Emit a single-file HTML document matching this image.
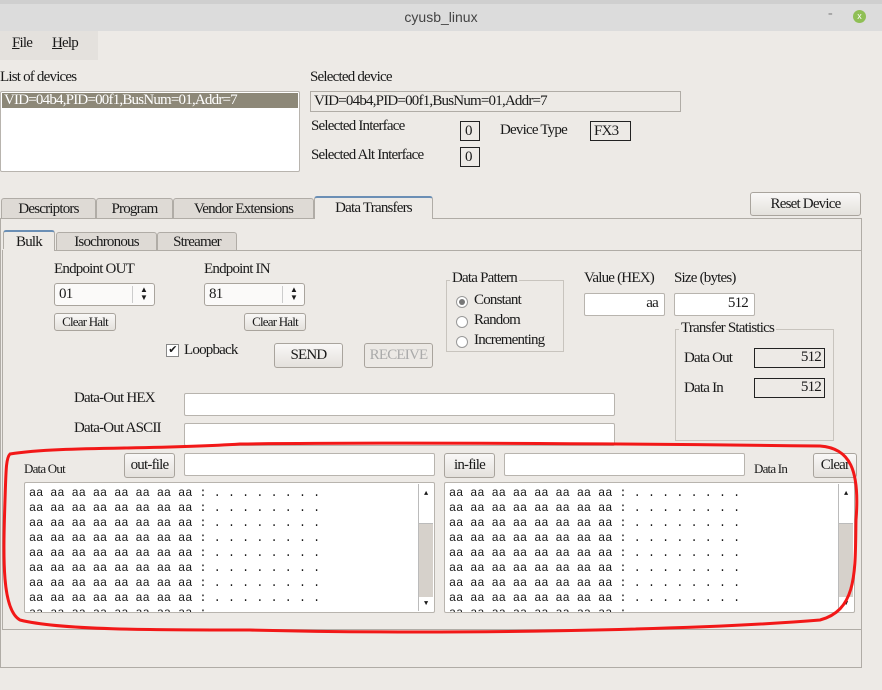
<!DOCTYPE html>
<html><head><meta charset="utf-8"><style>
*{box-sizing:border-box;margin:0;padding:0}
body{width:882px;height:690px;overflow:hidden;background:#edeae6;font-family:"Liberation Serif",serif;font-size:15px;color:#1a1a1a;position:relative;letter-spacing:-0.8px}
.a{position:absolute;white-space:nowrap}
.box{position:absolute;background:#fff;border:1px solid #b8b4ae;border-radius:2px}
.btn{position:absolute;background:linear-gradient(#f9f8f7,#e4e1dc);border:1px solid #a9a49d;border-radius:3px;text-align:center}
.blk{position:absolute;border:1px solid #222;background:#edeae6}
.tab{position:absolute;border:1px solid #b0aca6;border-bottom:none;background:#dedad5;text-align:center;border-radius:3px 3px 0 0}
.mono{font-family:"Liberation Mono",monospace;font-size:12px;line-height:15px;letter-spacing:-0.1px;padding:3px 0 0 4px;white-space:pre;overflow:hidden}
.sb{position:absolute;top:1px;right:1px;width:15px;bottom:1px;background:#d6d1cb;border-left:1px solid #bbb}
</style></head><body>
<div class="a" style="left:0;top:0;width:882px;height:4px;background:#cfcfcf"></div>
<div class="a" style="left:0;top:4px;width:882px;height:27px;background:#dcdcdc;text-align:center;font-family:'Liberation Sans',sans-serif;font-size:14px;line-height:27px;color:#444;letter-spacing:0">cyusb_linux</div>
<div class="a" style="left:828px;top:6px;color:#777;font-size:14px">-</div>
<div class="a" style="left:853px;top:10px;width:13px;height:13px;border-radius:50%;background:#8fbf55;color:#fff;font-size:9px;text-align:center;line-height:13px;font-family:'Liberation Sans',sans-serif;letter-spacing:0">x</div>
<div class="a" style="left:0;top:31px;width:98px;height:29px;background:#e4e1dd"></div>
<div class="a" style="left:12px;top:35px"><u>F</u>ile</div>
<div class="a" style="left:52px;top:35px"><u>H</u>elp</div>

<div class="a" style="left:0;top:69px">List of devices</div>
<div class="box" style="left:0;top:91px;width:300px;height:81px"></div>
<div class="a" style="left:2px;top:93px;width:296px;height:15px;background:#8d8878;color:#fff;padding-left:2px;line-height:15px">VID=04b4,PID=00f1,BusNum=01,Addr=7</div>
<div class="a" style="left:310px;top:69px">Selected device</div>
<div class="a" style="left:310px;top:91px;width:371px;height:21px;border:1px solid #b0aca6;padding:1px 0 0 3px">VID=04b4,PID=00f1,BusNum=01,Addr=7</div>
<div class="a" style="left:311px;top:118px">Selected Interface</div>
<div class="blk" style="left:460px;top:121px;width:20px;height:20px;padding:1px 0 0 4px">0</div>
<div class="a" style="left:500px;top:122px">Device Type</div>
<div class="blk" style="left:590px;top:121px;width:41px;height:20px;padding:1px 0 0 3px">FX3</div>
<div class="a" style="left:311px;top:147px">Selected Alt Interface</div>
<div class="blk" style="left:460px;top:147px;width:20px;height:20px;padding:1px 0 0 4px">0</div>

<div class="tab" style="left:1px;top:198px;width:95px;height:20px;line-height:20px">Descriptors</div>
<div class="tab" style="left:96px;top:198px;width:77px;height:20px;line-height:20px">Program</div>
<div class="tab" style="left:173px;top:198px;width:141px;height:20px;line-height:20px">Vendor Extensions</div>
<div class="tab" style="left:314px;top:196px;width:119px;height:23px;line-height:20px;background:#edeae6;border-top:2px solid #6b8fb5">Data Transfers</div>
<div class="btn" style="left:750px;top:192px;width:111px;height:24px;line-height:22px">Reset Device</div>
<div class="a" style="left:0;top:218px;width:862px;height:450px;border:1px solid #b0aca6;border-top:none"></div>
<div class="a" style="left:0;top:218px;width:314px;border-top:1px solid #b0aca6"></div>
<div class="a" style="left:433px;top:218px;width:429px;border-top:1px solid #b0aca6"></div>

<div class="tab" style="left:3px;top:230px;width:52px;height:21px;line-height:20px;background:#edeae6;border-top:2px solid #6b8fb5">Bulk</div>
<div class="tab" style="left:56px;top:232px;width:101px;height:18px;line-height:18px">Isochronous</div>
<div class="tab" style="left:157px;top:232px;width:80px;height:18px;line-height:18px">Streamer</div>
<div class="a" style="left:2px;top:250px;width:860px;height:380px;border:1px solid #b0aca6"></div>
<div class="a" style="left:3px;top:249px;width:51px;height:3px;background:#edeae6"></div>

<div class="a" style="left:54px;top:261px">Endpoint OUT</div>
<div class="a" style="left:204px;top:261px">Endpoint IN</div>
<div class="btn" style="left:54px;top:283px;width:101px;height:23px;line-height:21px;text-align:left;padding-left:4px;background:#fbfaf9">01<span style="position:absolute;right:0;top:2px;width:22px;border-left:1px solid #ccc;height:17px;font-size:8px;line-height:8px;text-align:center">▲<br>▼</span></div>
<div class="btn" style="left:204px;top:283px;width:101px;height:23px;line-height:21px;text-align:left;padding-left:4px;background:#fbfaf9">81<span style="position:absolute;right:0;top:2px;width:22px;border-left:1px solid #ccc;height:17px;font-size:8px;line-height:8px;text-align:center">▲<br>▼</span></div>
<div class="btn" style="left:54px;top:313px;width:62px;height:18px;font-size:13px;line-height:16px">Clear Halt</div>
<div class="btn" style="left:244px;top:313px;width:62px;height:18px;font-size:13px;line-height:16px">Clear Halt</div>
<div class="a" style="left:166px;top:344px;width:13px;height:13px;border:1px solid #888;background:#fff;font-size:11px;line-height:11px;text-align:center">✔</div>
<div class="a" style="left:184px;top:342px">Loopback</div>
<div class="btn" style="left:274px;top:343px;width:69px;height:25px;line-height:23px">SEND</div>
<div class="btn" style="left:364px;top:343px;width:69px;height:25px;line-height:23px;color:#aaa;background:#ece9e5">RECEIVE</div>

<div class="a" style="left:446px;top:280px;width:118px;height:72px;border:1px solid #c8c4be"></div>
<div class="a" style="left:450px;top:270px;background:#edeae6;padding:0 2px">Data Pattern</div>
<div class="a" style="left:456px;top:296px;width:12px;height:12px;border:1px solid #999;border-radius:50%;background:#fff"><div style="margin:2px;width:6px;height:6px;border-radius:50%;background:#777"></div></div>
<div class="a" style="left:474px;top:292px">Constant</div>
<div class="a" style="left:456px;top:316px;width:12px;height:12px;border:1px solid #999;border-radius:50%;background:#fff"></div>
<div class="a" style="left:474px;top:312px">Random</div>
<div class="a" style="left:456px;top:336px;width:12px;height:12px;border:1px solid #999;border-radius:50%;background:#fff"></div>
<div class="a" style="left:474px;top:332px">Incrementing</div>

<div class="a" style="left:584px;top:270px">Value (HEX)</div>
<div class="a" style="left:674px;top:270px">Size (bytes)</div>
<div class="box" style="left:584px;top:293px;width:81px;height:23px;text-align:right;padding:1px 6px 0 0">aa</div>
<div class="box" style="left:674px;top:293px;width:81px;height:23px;text-align:right;padding:1px 6px 0 0">512</div>
<div class="a" style="left:675px;top:329px;width:159px;height:112px;border:1px solid #c8c4be"></div>
<div class="a" style="left:679px;top:320px;background:#edeae6;padding:0 2px">Transfer Statistics</div>
<div class="a" style="left:684px;top:350px">Data Out</div>
<div class="blk" style="left:754px;top:348px;width:71px;height:20px;text-align:right;padding:0 3px 0 0">512</div>
<div class="a" style="left:684px;top:380px">Data In</div>
<div class="blk" style="left:754px;top:378px;width:71px;height:20px;text-align:right;padding:0 3px 0 0">512</div>

<div class="a" style="left:74px;top:390px">Data-Out HEX</div>
<div class="box" style="left:184px;top:393px;width:431px;height:23px"></div>
<div class="a" style="left:74px;top:420px">Data-Out ASCII</div>
<div class="box" style="left:184px;top:423px;width:431px;height:23px"></div>

<div class="a" style="left:24px;top:461px;font-size:13px">Data Out</div>
<div class="btn" style="left:124px;top:453px;width:51px;height:25px;line-height:23px">out-file</div>
<div class="box" style="left:184px;top:453px;width:251px;height:23px"></div>
<div class="btn" style="left:444px;top:453px;width:51px;height:25px;line-height:23px">in-file</div>
<div class="box" style="left:504px;top:453px;width:241px;height:23px"></div>
<div class="a" style="left:754px;top:461px;font-size:13px">Data In</div>
<div class="btn" style="left:813px;top:453px;width:44px;height:25px;line-height:23px">Clear</div>

<div class="box mono" style="left:24px;top:482px;width:411px;height:131px">aa aa aa aa aa aa aa aa : . . . . . . . .
aa aa aa aa aa aa aa aa : . . . . . . . .
aa aa aa aa aa aa aa aa : . . . . . . . .
aa aa aa aa aa aa aa aa : . . . . . . . .
aa aa aa aa aa aa aa aa : . . . . . . . .
aa aa aa aa aa aa aa aa : . . . . . . . .
aa aa aa aa aa aa aa aa : . . . . . . . .
aa aa aa aa aa aa aa aa : . . . . . . . .
aa aa aa aa aa aa aa aa : . . . . . . . .<div class="sb"><div style="background:#fff;height:40px;border-bottom:1px solid #bbb;font-size:7px;text-align:center;padding-top:3px">▲</div><div style="position:absolute;bottom:0;width:14px;height:14px;background:#fff;font-size:7px;text-align:center">▼</div></div></div>
<div class="box mono" style="left:444px;top:482px;width:411px;height:131px">aa aa aa aa aa aa aa aa : . . . . . . . .
aa aa aa aa aa aa aa aa : . . . . . . . .
aa aa aa aa aa aa aa aa : . . . . . . . .
aa aa aa aa aa aa aa aa : . . . . . . . .
aa aa aa aa aa aa aa aa : . . . . . . . .
aa aa aa aa aa aa aa aa : . . . . . . . .
aa aa aa aa aa aa aa aa : . . . . . . . .
aa aa aa aa aa aa aa aa : . . . . . . . .
aa aa aa aa aa aa aa aa : . . . . . . . .<div class="sb"><div style="background:#fff;height:40px;border-bottom:1px solid #bbb;font-size:7px;text-align:center;padding-top:3px">▲</div><div style="position:absolute;bottom:0;width:14px;height:14px;background:#fff;font-size:7px;text-align:center">▼</div></div></div>

<svg class="a" style="left:0;top:440px" width="882" height="200"><path d="M10,14 C60,6 150,10 240,4 C400,2 650,4 820,6 C850,8 860,30 856,80 C855,130 858,170 820,180 C700,190 450,195 250,190 C150,190 60,190 20,180 C2,170 3,120 5,60 C6,30 6,18 10,14 Z" fill="none" stroke="#f21818" stroke-width="3"/></svg>
</body></html>
